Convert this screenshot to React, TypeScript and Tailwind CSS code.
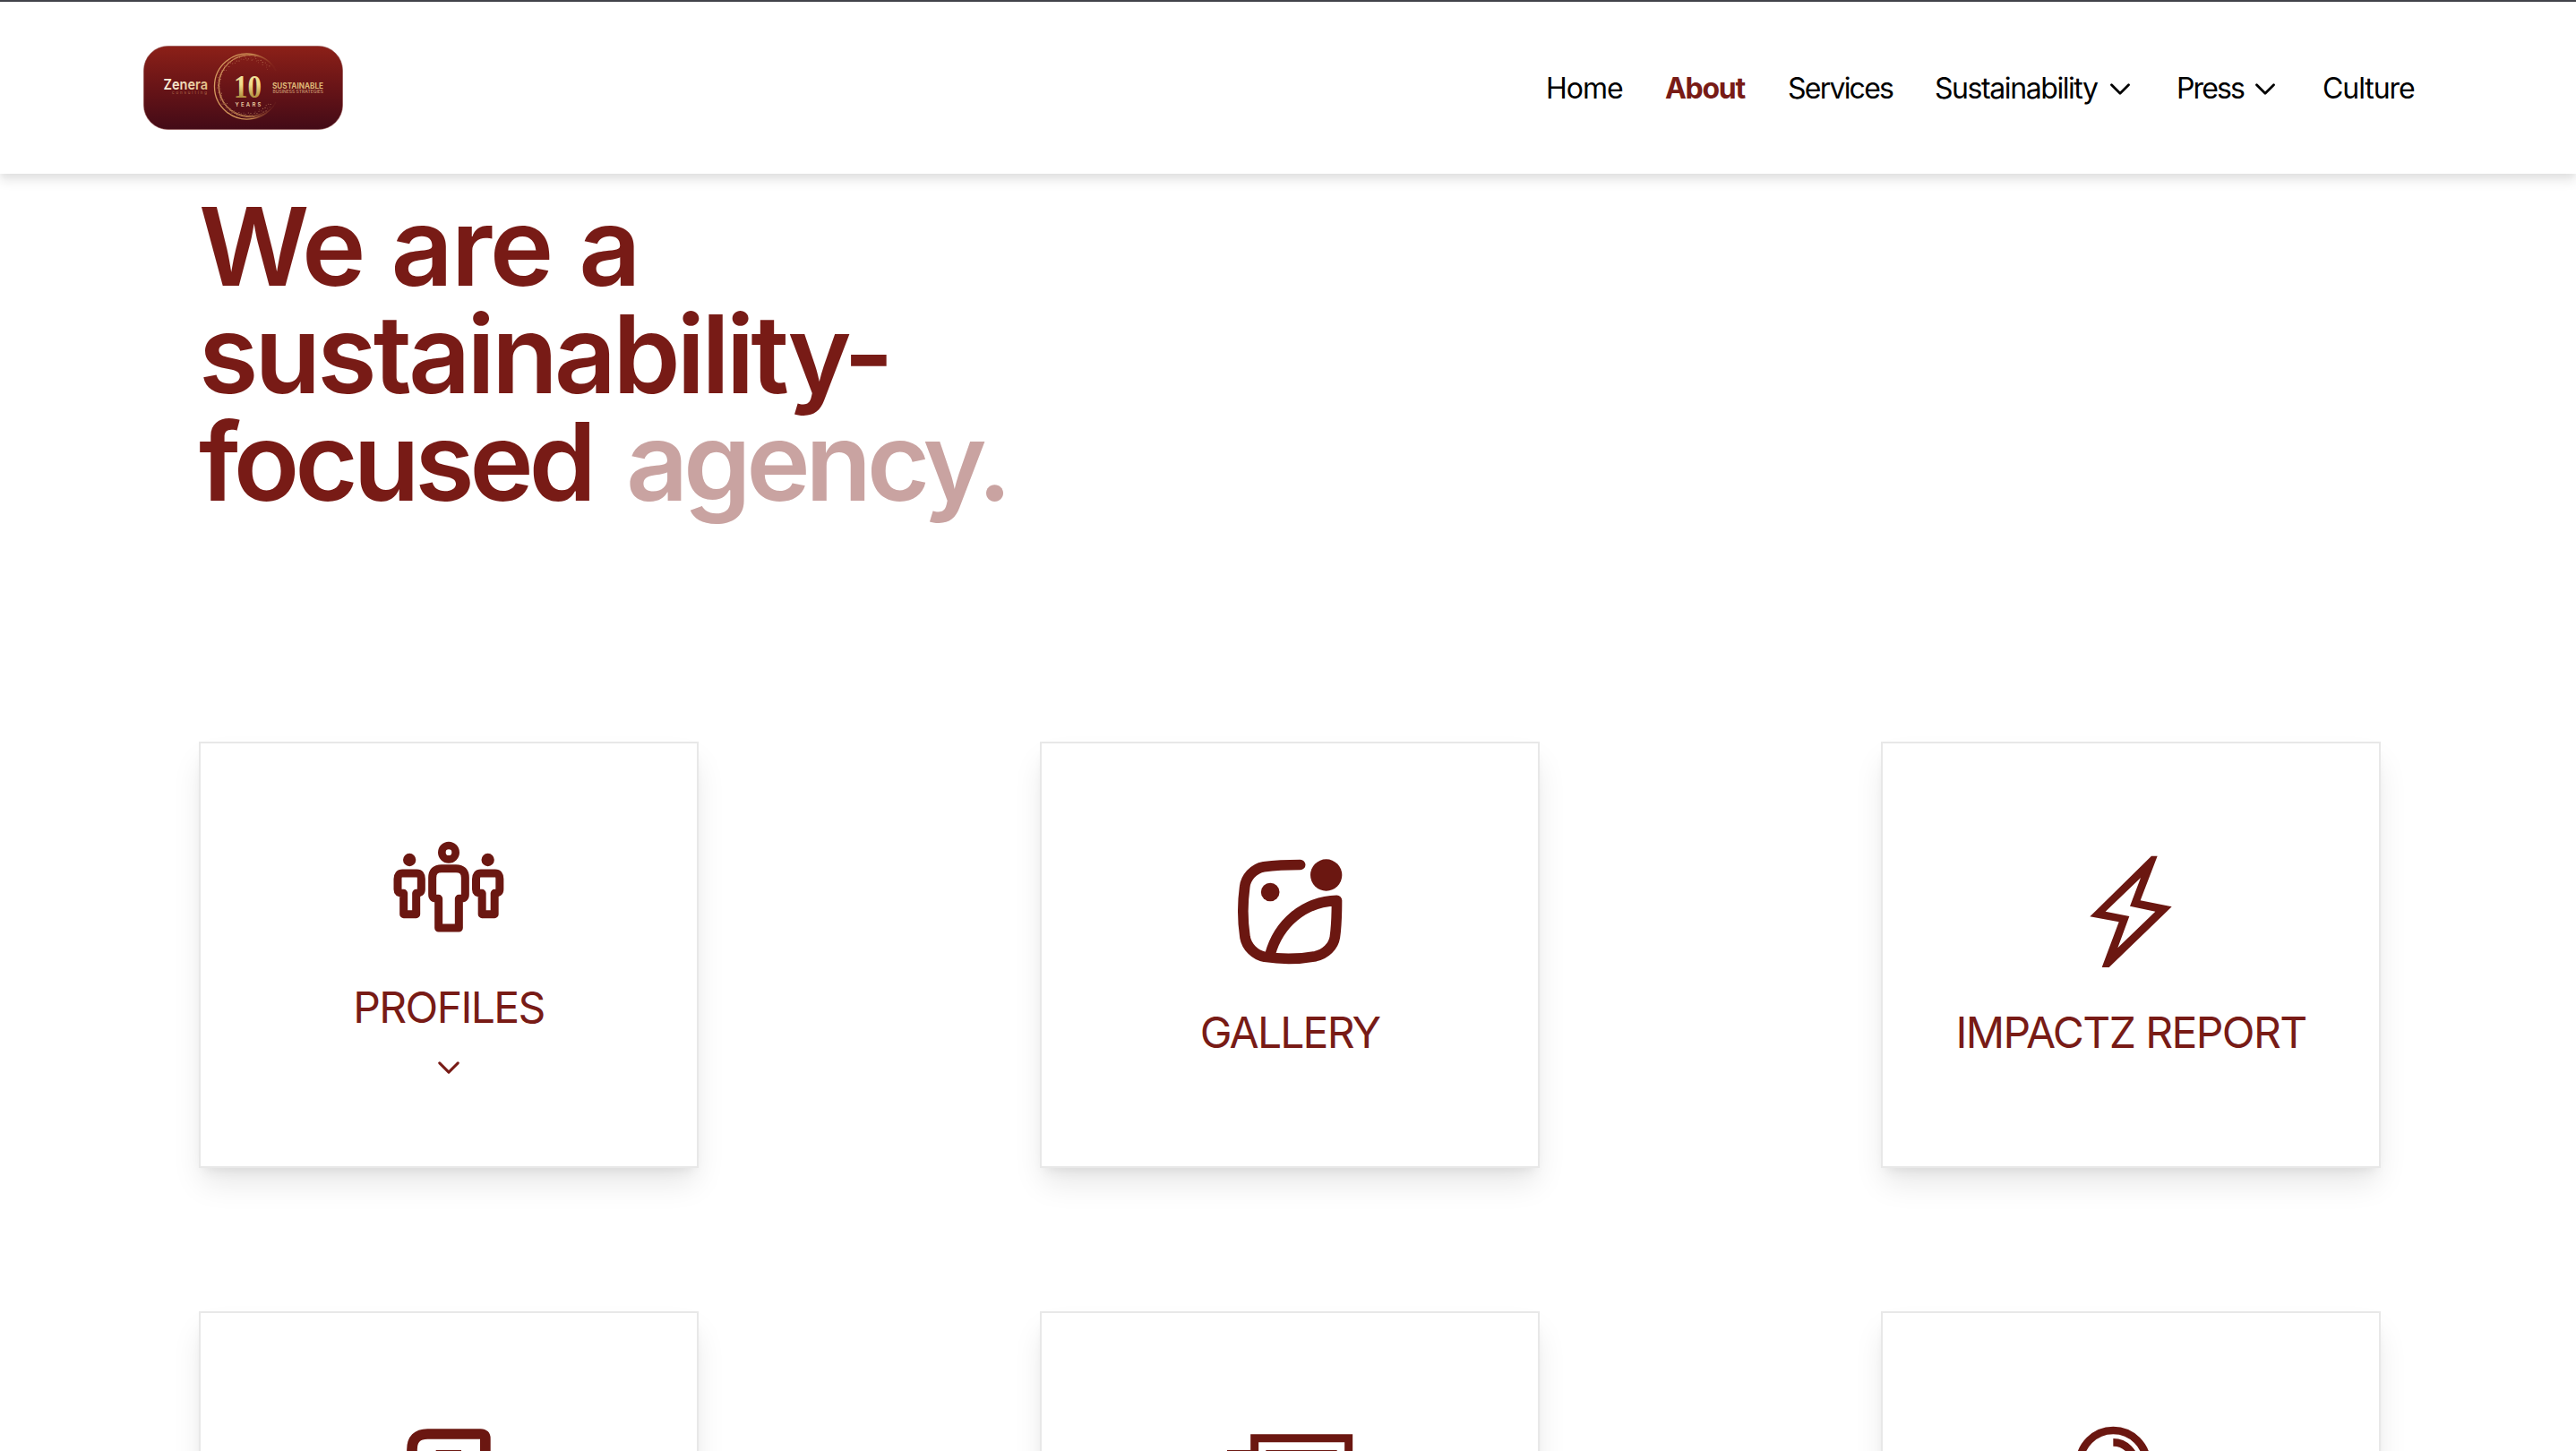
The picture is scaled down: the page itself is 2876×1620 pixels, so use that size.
import type { ReactNode } from "react";

const MAROON = "#6b1711";

function Chevron({ className }: { className: string }) {
  return (
    <svg viewBox="0 0 22 13" className={className} fill="none" stroke="currentColor" strokeWidth="2.8" strokeLinecap="round" strokeLinejoin="round">
      <path d="M1.5 1.7 11 11.2 20.5 1.7" />
    </svg>
  );
}

function Logo() {
  const dots = Array.from({ length: 110 }, (_, i) => {
    const a = ((40 + ((i * 137.5) % 285)) * Math.PI) / 180;
    const r = 29.5 + ((i * 7) % 13) * 0.42;
    return { x: 116 + Math.cos(a) * r, y: 45.5 - Math.sin(a) * r, o: 0.25 + ((i * 5) % 7) * 0.08 };
  });
  return (
    <svg viewBox="0 0 223 94" className="h-[94px] w-[223px]" fontFamily="Inter, sans-serif">
      <defs>
        <linearGradient id="plate" x1="0" y1="0" x2="0" y2="1">
          <stop offset="0" stopColor="#8c2018" />
          <stop offset="0.5" stopColor="#681417" />
          <stop offset="1" stopColor="#430b17" />
        </linearGradient>
        <linearGradient id="gold" x1="0" y1="0" x2="0" y2="1">
          <stop offset="0" stopColor="#f3e6a8" />
          <stop offset="0.45" stopColor="#f0dc8a" />
          <stop offset="1" stopColor="#8f6416" />
        </linearGradient>
        <linearGradient id="ring" x1="0" y1="0" x2="1" y2="0">
          <stop offset="0" stopColor="#d59a5f" />
          <stop offset="0.6" stopColor="#c98a50" />
          <stop offset="0.95" stopColor="#a5522f" stopOpacity="0.1" />
        </linearGradient>
        <linearGradient id="cream" x1="0" y1="0" x2="1" y2="0">
          <stop offset="0" stopColor="#fbf3e2" />
          <stop offset="1" stopColor="#e2bd84" />
        </linearGradient>
      </defs>
      <rect x="0.5" y="0.5" width="222" height="93" rx="27" fill="url(#plate)" stroke="#8d4a48" strokeOpacity="0.6" />
      <g fill="none" stroke="url(#ring)">
        <path d="M148 28A36.5 36.5 0 1 0 148 63" strokeWidth="1.3" />
        <path d="M147 24A35 35 0 1 0 146 67" strokeWidth="0.8" />
        <path d="M143 21A34 34 0 1 0 141 70" strokeWidth="0.8" />
      </g>
      {dots.map((d, i) => (
        <circle key={i} cx={d.x} cy={d.y} r="0.55" fill="#e0a878" opacity={d.o} />
      ))}
      <text x="22.5" y="49" fontSize="16.5" fontWeight="600" fill="url(#cream)" textLength="49.5" lengthAdjust="spacingAndGlyphs">Zenera</text>
      <text x="32" y="54" fontSize="4.5" fill="#b06a4c" textLength="39">consulting</text>
      <text x="101" y="57.5" fontSize="36" fontWeight="700" fontFamily="Liberation Serif, serif" fill="url(#gold)" textLength="31" lengthAdjust="spacingAndGlyphs">10</text>
      <text x="102.5" y="67.5" fontSize="6" fontWeight="600" fill="#e8c9a0" textLength="29">YEARS</text>
      <text x="144" y="47.5" fontSize="9" fontWeight="700" fill="#dfb877" textLength="57" lengthAdjust="spacingAndGlyphs">SUSTAINABLE</text>
      <text x="144.5" y="53.2" fontSize="5" fontWeight="600" fill="#c08a68" textLength="56.5" lengthAdjust="spacingAndGlyphs">BUSINESS STRATEGIES</text>
    </svg>
  );
}

function Icon({ viewBox, children }: { viewBox: string; children: ReactNode }) {
  return (
    <svg viewBox={viewBox} className="size-32 shrink-0 overflow-visible" fill="none" stroke={MAROON}>
      {children}
    </svg>
  );
}

function SidePerson({ dx }: { dx: number }) {
  return (
    <g transform={`translate(${dx} 0)`}>
      <circle cx="111.500" cy="120" r="21.500" fill={MAROON} stroke="none" />
      <path d="M88 165H136Q151 165 151 184V219Q151 232 134 232V302H92V232Q72 232 72 219V184Q72 165 88 165Z" strokeWidth="27" strokeLinejoin="round" />
    </g>
  );
}

const PeopleIcon = () => (
  <Icon viewBox="51 18 384 384">
    <circle cx="243" cy="95" r="23" strokeWidth="26" />
    <path d="M219 149H267Q298 149 298 180V236Q298 250 277 250V348H209V250Q188 250 188 236V180Q188 149 219 149Z" strokeWidth="27" strokeLinejoin="round" />
    <SidePerson dx={0} />
    <SidePerson dx={262.5} />
  </Icon>
);

const GalleryIcon = () => (
  <Icon viewBox="108 102 384 384">
    <g strokeWidth="35" strokeLinecap="round" strokeLinejoin="round">
      <path d="M335 136.500C290 136.500 245 139 213 143C178 149 152 180 149 211C142 262 141 320 150 379C156 412 183 438 216 445C270 453 330 453 386 443C420 435 446 410 451 379C456 345 457.500 300 457.500 256C345 260 262 335 234 437" />
    </g>
    <g fill={MAROON} stroke="none">
      <circle cx="422" cy="171" r="53" />
      <circle cx="234.500" cy="228" r="31" />
    </g>
  </Icon>
);

const BoltIcon = () => (
  <Icon viewBox="435 102 384 384">
    <path
      fill={MAROON}
      stroke="none"
      fillRule="evenodd"
      d="M696 107H716L659 256 764 277 554 480H530L587 328 490 310ZM660 180 542 293 622 309 583 415 709 293 624 275Z"
    />
  </Icon>
);

const BookIcon = () => (
  <Icon viewBox="51 90 384 384">
    <path d="M365.500 440V138Q365.500 123 350 123H172Q120 123 120 175V440" strokeWidth="35" />
    <path d="M200 194H285" strokeWidth="34" />
  </Icon>
);

const PapersIcon = () => (
  <Icon viewBox="78 90 384 384">
    <path d="M152 440V137H467V440" strokeWidth="27" />
    <path d="M190 190H428" strokeWidth="26" />
    <path d="M60 190H140" strokeWidth="26" />
  </Icon>
);

const SearchIcon = () => (
  <Icon viewBox="105 90 384 384">
    <circle cx="238" cy="224" r="113" strokeWidth="26" />
    <path d="M238 151A73 73 0 0 1 311 224" strokeWidth="26" />
    <path d="M318 304 450 436" strokeWidth="28" />
  </Icon>
);

const cardBase =
  "flex h-[476px] w-[558px] flex-col items-center border-2 border-[#e8e8e8] bg-white text-[#781b16] shadow-[0_20px_32px_-4px_rgba(0,0,0,0.1),0_8px_12px_-6px_rgba(0,0,0,0.08)]";

function Card({ icon, label }: { icon: ReactNode; label?: ReactNode }) {
  return (
    <div className={`${cardBase} pt-[124px]`}>
      {icon}
      {label}
    </div>
  );
}

export default function App() {
  return (
    <div className="h-screen overflow-hidden bg-white font-['Inter',sans-serif]">
      <header className="relative flex h-[194px] items-center justify-between border-t-2 border-[#42434a] bg-white pr-[180px] pl-[160px] shadow-[0_8px_12px_0_rgba(0,0,0,0.09),0_4px_6px_0_rgba(0,0,0,0.04)]">
        <Logo />
        <nav className="flex gap-12 pt-0.5 text-[32px] leading-[48px] whitespace-nowrap text-black">
          <a className="w-[85px] tracking-[-1px]">Home</a>
          <a className="w-[89px] font-bold tracking-[-1.300px] text-[#781b16]">About</a>
          <a className="w-[116px] tracking-[-1.770px]">Services</a>
          <a className="flex w-[222px] items-center justify-between pr-1 tracking-[-1.420px]">
            Sustainability
            <Chevron className="h-[13px] w-[22px]" />
          </a>
          <a className="flex w-[115px] items-center justify-between pr-[5px] tracking-[-1.880px]">
            Press
            <Chevron className="h-[13px] w-[22px]" />
          </a>
          <a className="w-[103px] tracking-[-1.070px]">Culture</a>
        </nav>
      </header>

      <main className="pt-[21px] pr-[218px] pl-[222px]">
        <h1 className="text-[121px] leading-[120px] font-semibold whitespace-nowrap text-[#781b16]">
          <span className="block tracking-[-2.300px] [word-spacing:2px]">We are a</span>
          <span className="block tracking-[-4.100px]">sustainability-</span>
          <span className="flex">
            <span className="w-[477px] tracking-[-5.300px]">focused</span>
            <span className="tracking-[-5.500px] text-[#c9a3a1]">agency.</span>
          </span>
        </h1>

        <section className="mt-[253px] grid grid-cols-[repeat(3,558px)] justify-between gap-y-40">
          <div className={`${cardBase} pt-24`}>
            <PeopleIcon />
            <p className="mt-[43px] text-5xl leading-[56px] tracking-[-1.600px]">PROFILES</p>
            <Chevron className="mt-8 h-[14px] w-6" />
          </div>
          <Card icon={<GalleryIcon />} label={<p className="mt-[43px] text-5xl leading-[56px] tracking-[-1.800px]">GALLERY</p>} />
          <Card icon={<BoltIcon />} label={<p className="mt-[43px] text-5xl leading-[56px] tracking-[-1.600px]">IMPACTZ REPORT</p>} />
          <Card icon={<BookIcon />} />
          <Card icon={<PapersIcon />} />
          <Card icon={<SearchIcon />} />
        </section>
      </main>
    </div>
  );
}
